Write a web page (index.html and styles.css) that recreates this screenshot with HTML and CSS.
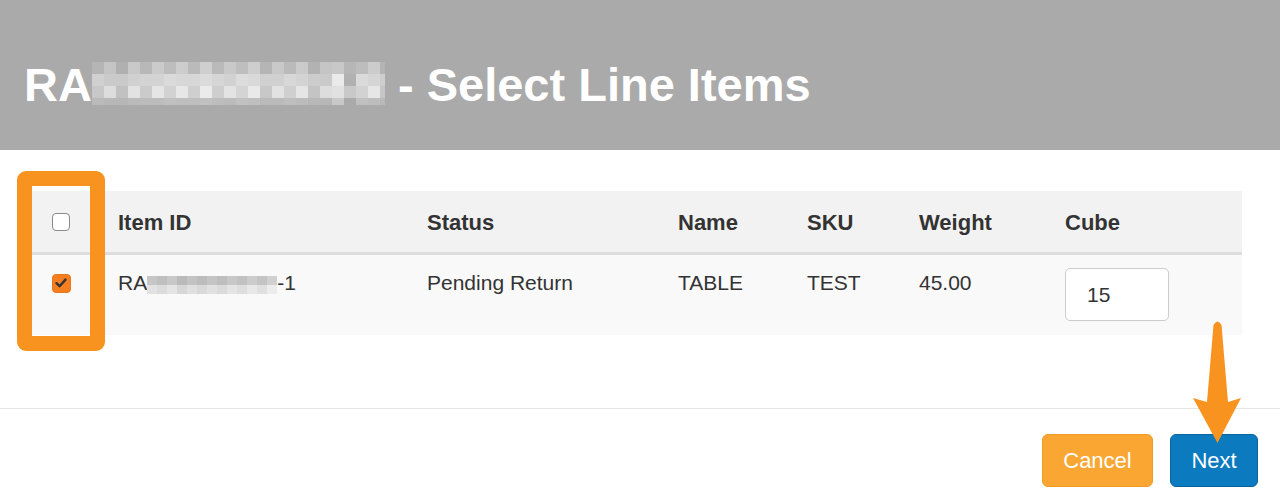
FILE: index.html
```html
<!DOCTYPE html>
<html lang="en">
<head>
<meta charset="utf-8">
<title>Select Line Items</title>
<link rel="stylesheet" href="styles.css">
</head>
<body>
<div class="modal">
  <header class="modal-header">
    <h1 class="title">RA<span class="mosaic mosaic-title" aria-label="redacted"></span> - Select Line Items</h1>
  </header>

  <div class="modal-body">
    <table class="items">
      <colgroup>
        <col class="c-check"><col class="c-id"><col class="c-status"><col class="c-name"><col class="c-sku"><col class="c-weight"><col class="c-cube">
      </colgroup>
      <thead>
        <tr>
          <th class="check"><span class="cb"></span></th>
          <th>Item ID</th>
          <th>Status</th>
          <th>Name</th>
          <th>SKU</th>
          <th>Weight</th>
          <th>Cube</th>
        </tr>
      </thead>
      <tbody>
        <tr>
          <td class="check"><span class="cb checked"><svg viewBox="0 0 18 18" width="18" height="18"><path d="M4.5 9.2 L7.6 12.2 L13.5 5.6" fill="none" stroke="#333" stroke-width="2.4" stroke-linecap="round" stroke-linejoin="round"/></svg></span></td>
          <td>RA<span class="mosaic mosaic-row"></span>-1</td>
          <td>Pending Return</td>
          <td>TABLE</td>
          <td>TEST</td>
          <td>45.00</td>
          <td class="cube"><input class="qty" type="text" value="15"></td>
        </tr>
      </tbody>
    </table>
  </div>

  <footer class="modal-footer">
    <button class="btn btn-cancel" type="button">Cancel</button>
    <button class="btn btn-next" type="button">Next</button>
  </footer>

  <div class="highlight"></div>
  <svg class="arrow" viewBox="0 0 54 132" width="54" height="132">
    <path d="M23.5 7 Q27.5 0 31.5 7 L38 84 L51 80 L27.5 125 L3 80 L17 84 Z" fill="#f7931e"/>
  </svg>
</div>
</body>
</html>
```

FILE: styles.css
```css
* { box-sizing: border-box; }

body {
  margin: 0;
  background: #ffffff;
  color: #333333;
  font-family: "Liberation Sans", Arial, Helvetica, sans-serif;
}

.modal {
  position: relative;
  width: 1280px;
  height: 497px;
  overflow: hidden;
  background: #ffffff;
}

/* Header */
.modal-header {
  height: 150px;
  background: #aaaaaa;
  padding: 57px 0 0 24px;
}

.title {
  margin: 0;
  font-size: 47px;
  font-weight: bold;
  line-height: 55px;
  color: #ffffff;
  white-space: nowrap;
}

.mosaic { display: inline-block; }

.mosaic-title {
  width: 293px;
  height: 43px;
  vertical-align: -4px;
  background:
    linear-gradient(180deg, rgba(160,160,160,.35) 0 12px, rgba(255,255,255,0) 12px 24px, rgba(255,255,255,.12) 24px 36px, rgba(160,160,160,.45) 36px 43px),
    repeating-conic-gradient(rgba(255,255,255,.14) 0 25%, rgba(0,0,0,.04) 0 50%) 0 0 / 24px 24px,
    linear-gradient(90deg,
      #c8c8c8 0 12px, #d2d2d2 12px 24px, #c0c0c0 24px 36px, #d8d8d8 36px 48px,
      #cccccc 48px 60px, #dcdcdc 60px 72px, #d4d4d4 72px 84px, #e0e0e0 84px 96px,
      #d0d0d0 96px 108px, #e4e4e4 108px 120px, #cfcfcf 120px 132px, #dadada 132px 144px,
      #d6d6d6 144px 156px, #e2e2e2 156px 168px, #c8c8c8 168px 180px, #d8d8d8 180px 192px,
      #d0d0d0 192px 204px, #dcdcdc 204px 216px, #c4c4c4 216px 228px, #d2d2d2 228px 240px,
      #e6e6e6 240px 252px, #b8b8b8 252px 264px, #d4d4d4 264px 276px, #dedede 276px 288px,
      #c6c6c6 288px 300px);
}

/* Body / table */
.modal-body {
  padding: 41px 0 73px 31px;
}

.items {
  width: 1211px;
  table-layout: fixed;
  border-collapse: separate;
  border-spacing: 0;
}

.c-check  { width: 87px; }
.c-id     { width: 309px; }
.c-status { width: 251px; }
.c-name   { width: 129px; }
.c-sku    { width: 112px; }
.c-weight { width: 146px; }
.c-cube   { width: 177px; }

.items th {
  height: 64px;
  padding: 3px 0 0 0;
  background: #f2f2f2;
  border-bottom: 3px solid #dddddd;
  text-align: left;
  vertical-align: middle;
  font-size: 22px;
  font-weight: bold;
  color: #333333;
}

.items td {
  height: 80px;
  padding: 16px 0 0 0;
  background: #f9f9f9;
  vertical-align: top;
  font-size: 21px;
  line-height: 24px;
  color: #333333;
  white-space: nowrap;
}

.items th.check { padding: 0 0 0 21px; }
.items td.check { padding: 19px 0 0 21px; }
.items td.cube  { padding-top: 13px; }

.cb {
  display: block;
  width: 18px;
  height: 18px;
  border: 1px solid #8a8a8a;
  border-radius: 4px;
  background: #ffffff;
}

.cb.checked {
  width: 19px;
  height: 19px;
  border: 1px solid #e8761a;
  background: #f57f20;
}

.cb svg { display: block; margin: -1px 0 0 -1px; }

.mosaic-row {
  width: 130px;
  height: 18px;
  vertical-align: -4px;
  background:
    linear-gradient(180deg, rgba(150,150,150,.25) 0 9px, rgba(255,255,255,.3) 9px 18px),
    linear-gradient(90deg,
      #d6d6d6 0 10px, #cdcdcd 10px 20px, #d9d9d9 20px 30px, #c6c6c6 30px 40px,
      #d2d2d2 40px 50px, #c9c9c9 50px 60px, #d4d4d4 60px 70px, #cbcbcb 70px 80px,
      #d8d8d8 80px 90px, #d0d0d0 90px 100px, #dedede 100px 110px, #d3d3d3 110px 120px,
      #e4e4e4 120px 130px);
}

.qty {
  display: block;
  width: 104px;
  height: 53px;
  padding: 0 0 0 21px;
  border: 1px solid #cccccc;
  border-radius: 5px;
  background: #ffffff;
  font-family: "Liberation Sans", Arial, Helvetica, sans-serif;
  font-size: 21px;
  color: #333333;
  outline: none;
}

/* Footer */
.modal-footer {
  border-top: 1px solid #e5e5e5;
  display: flex;
  justify-content: flex-end;
  gap: 17px;
  padding: 25px 22px 0 0;
}

.btn {
  height: 53px;
  border-radius: 6px;
  border: 1px solid;
  color: #ffffff;
  font-family: "Liberation Sans", Arial, Helvetica, sans-serif;
  font-size: 22px;
  padding: 0;
  cursor: pointer;
}

.btn-cancel {
  width: 111px;
  background: #f9a633;
  border-color: #f29b22;
}

.btn-next {
  width: 88px;
  background: #0b7abf;
  border-color: #07669f;
}

/* Annotations over content */
.highlight {
  position: absolute;
  left: 17px;
  top: 171px;
  width: 88px;
  height: 180px;
  border: 15px solid #f7931e;
  border-radius: 9px;
}

.arrow {
  position: absolute;
  left: 1190px;
  top: 318px;
}
```
